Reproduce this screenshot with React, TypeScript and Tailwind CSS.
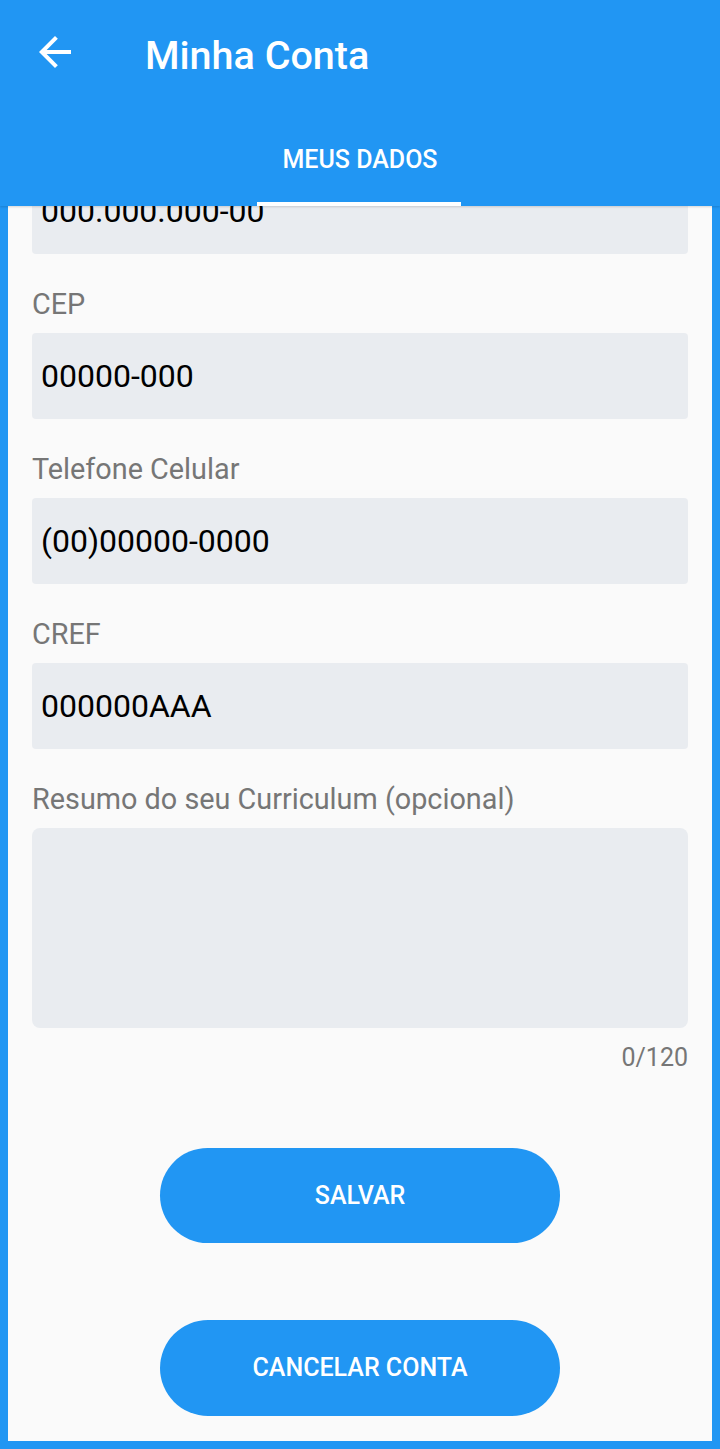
import React from "react";

const font = { fontFamily: "Roboto, 'Noto Sans', Arial, sans-serif" };

function Label({ children }: { children: React.ReactNode }) {
  return <div className="h-[30px] text-[28.8px] leading-[28px] text-[#767676] whitespace-nowrap">{children}</div>;
}

function Field({ label, value }: { label: string; value: string }) {
  return (
    <div className="mt-[36px] flex flex-col">
      <Label>{label}</Label>
      <div className="mt-[13px] h-[86px] rounded-[4px] bg-[#e9ecf0] pl-[9px] flex items-center text-[32px] leading-[1.2] text-black">
        {value}
      </div>
    </div>
  );
}

export default function App() {
  return (
    <div className="w-[720px] h-[1449px] bg-[#2196f3] flex flex-col overflow-hidden" style={font}>
      <header className="relative z-10 h-[206px] shrink-0 bg-[#2196f3] flex flex-col shadow-[0_1px_2px_rgba(0,0,0,0.15)]">
        <div className="h-[112px] flex items-center">
          <div className="ml-[31px] mb-[9px] w-[48px] h-[48px]">
            <svg viewBox="0 0 24 24" width="48" height="48" fill="white">
              <path d="M20 11H7.83l5.59-5.59L12 4l-8 8 8 8 1.41-1.41L7.83 13H20v-2z" />
            </svg>
          </div>
          <div className="ml-[66px] text-[39.5px] leading-none font-medium text-white">Minha Conta</div>
        </div>
        <div className="relative flex-1 flex items-center justify-center">
          <div className="text-[25px] leading-none font-medium text-white">MEUS DADOS</div>
          <div className="absolute bottom-0 left-[257px] w-[204px] h-[4px] bg-white" />
        </div>
      </header>
      <main className="mx-[8px] h-[1235px] bg-[#fafafa] overflow-hidden px-[24px] flex flex-col">
        <div className="mt-[-38px] h-[86px] shrink-0 rounded-[4px] bg-[#e9ecf0] pl-[9px] flex items-center text-[32px] leading-[1.2] text-black">
          000.000.000-00
        </div>
        <Field label="CEP" value="00000-000" />
        <Field label="Telefone Celular" value="(00)00000-0000" />
        <Field label="CREF" value="000000AAA" />
        <div className="mt-[36px] flex flex-col">
          <Label>Resumo do seu Curriculum (opcional)</Label>
          <div className="mt-[13px] h-[200px] rounded-[8px] bg-[#e9ecf0]" />
          <div className="mt-[15px] h-[30px] text-right text-[25px] leading-[30px] text-[#767676]">0/120</div>
        </div>
        <div className="mt-[75px] flex flex-col items-center">
          <button className="w-[400px] h-[95px] rounded-full bg-[#2196f3] text-white text-[25px] font-medium">SALVAR</button>
          <button className="mt-[77px] w-[400px] h-[96px] rounded-full bg-[#2196f3] text-white text-[25px] font-medium">CANCELAR CONTA</button>
        </div>
      </main>
    </div>
  );
}
